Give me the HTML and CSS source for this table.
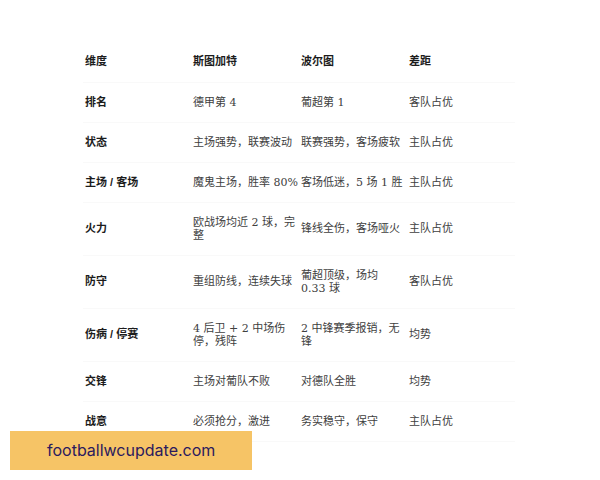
FILE: index.html
```html
<!DOCTYPE html>
<html lang="zh">
<head>
<meta charset="utf-8">
<link rel="stylesheet" href="styles.css">
</head>
<body>
<div class="page">
  <table class="cmp">
    <thead>
      <tr><th>维度</th><th>斯图加特</th><th>波尔图</th><th>差距</th></tr>
    </thead>
    <tbody>
      <tr><th>排名</th><td>德甲第 4</td><td>葡超第 1</td><td>客队占优</td></tr>
      <tr><th>状态</th><td>主场强势，联赛波动</td><td>联赛强势，客场疲软</td><td>主队占优</td></tr>
      <tr><th>主场 / 客场</th><td>魔鬼主场，胜率 80%</td><td>客场低迷，5 场 1 胜</td><td>主队占优</td></tr>
      <tr><th>火力</th><td>欧战场均近 2 球，完整</td><td>锋线全伤，客场哑火</td><td>主队占优</td></tr>
      <tr><th>防守</th><td>重组防线，连续失球</td><td>葡超顶级，场均 0.33 球</td><td>客队占优</td></tr>
      <tr><th>伤病 / 停赛</th><td>4 后卫 + 2 中场伤停，残阵</td><td>2 中锋赛季报销，无锋</td><td>均势</td></tr>
      <tr><th>交锋</th><td>主场对葡队不败</td><td>对德队全胜</td><td>均势</td></tr>
      <tr><th>战意</th><td>必须抢分，激进</td><td>务实稳守，保守</td><td>主队占优</td></tr>
    </tbody>
  </table>
  <div class="mark">footballwcupdate.com</div>
</div>
</body>
</html>
```
FILE: styles.css
```css
html, body {
  margin: 0;
  padding: 0;
  background: #ffffff;
}
.page {
  position: relative;
  width: 600px;
  height: 480px;
  padding: 42px 0 0 83px;
  box-sizing: border-box;
}
.cmp {
  border-collapse: collapse;
  table-layout: fixed;
  width: 432px;
  font-family: "DejaVu Serif", "Noto Sans CJK SC", serif;
  font-size: 11px;
  line-height: 13px;
  color: #404040;
}
.cmp tr {
  height: 40px;
}
.cmp th, .cmp td {
  padding: 13px 0 13px 2px;
  text-align: left;
  vertical-align: middle;
  border-bottom: 1px solid #f9f9f9;
}
.cmp td:nth-child(3) {
  padding-right: 3px;
}
.cmp th {
  font-family: "Liberation Sans", "Noto Sans CJK SC", sans-serif;
  font-weight: 700;
  color: #1c1c1c;
}
.mark {
  position: absolute;
  left: 10px;
  top: 431px;
  width: 205px;
  height: 39px;
  padding-left: 37px;
  background: #f6c466;
  color: #2b1a5e;
  font-family: "Inter", "Noto Sans", sans-serif;
  font-size: 16px;
  line-height: 39px;
}
```
